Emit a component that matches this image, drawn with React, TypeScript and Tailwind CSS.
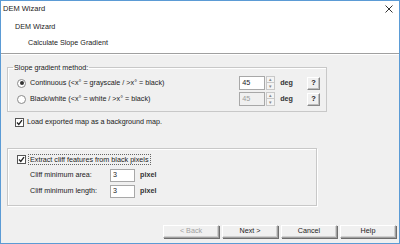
import React from "react";

const font = { fontFamily: '"Liberation Sans", Tahoma, sans-serif' };

function Radio({ checked }: { checked?: boolean }) {
  return (
    <span className="flex h-[9px] w-[9px] items-center justify-center rounded-full border border-[#8a8a8a] bg-white">
      {checked && <span className="h-[4px] w-[4px] rounded-full bg-[#333]" />}
    </span>
  );
}

function Check() {
  return (
    <span className="flex h-[9px] w-[9px] items-center justify-center border border-[#555] bg-white">
      <svg width="7" height="7" viewBox="0 0 7 7">
        <path d="M1 3.5 L2.8 5.5 L6 1.2" stroke="#222" strokeWidth="1.3" fill="none" />
      </svg>
    </span>
  );
}

function Spin({ value, disabled }: { value: string; disabled?: boolean }) {
  return (
    <div className="flex items-center">
      <div
        className={`flex h-[14px] w-[26px] items-center border border-[#a8a8a8] pl-[2px] text-[7.2px] ${
          disabled ? "bg-[#f0f0f0] text-[#9a9a9a]" : "bg-white text-[#222]"
        }`}
      >
        {value}
      </div>
      <div className="ml-[1px] flex h-[14px] w-[9px] flex-col">
        <div className="flex h-[7px] items-center justify-center border border-[#c8c8c8] bg-[#f4f4f4] text-[5px] leading-none text-[#888]">
          ▴
        </div>
        <div className="flex h-[7px] items-center justify-center border border-t-0 border-[#c8c8c8] bg-[#f4f4f4] text-[5px] leading-none text-[#888]">
          ▾
        </div>
      </div>
      <span className="ml-[5px] text-[7.2px] font-bold text-[#333]">deg</span>
    </div>
  );
}

function HelpBtn() {
  return (
    <div className="flex h-[13px] w-[13px] items-center justify-center border border-[#888] border-t-white border-l-white bg-[#f0f0f0] text-[7.5px] font-bold text-[#222] shadow-[inset_-1px_-1px_0_#bdbdbd]">
      ?
    </div>
  );
}

function Btn({ label, disabled }: { label: string; disabled?: boolean }) {
  return (
    <div
      className={`flex h-[13px] w-[56px] items-center justify-center border border-[#a0a0a0] border-t-white border-l-white bg-[#f0f0f0] text-[7.2px] shadow-[inset_-1px_-1px_0_#d0d0d0,1px_1px_0_#6d6d6d] ${
        disabled ? "text-[#a0a0a0]" : "text-[#222]"
      }`}
    >
      {label}
    </div>
  );
}

export default function App() {
  return (
    <div
      style={font}
      className="flex h-[244px] w-[400px] flex-col overflow-hidden border border-[#5b9bd5] bg-[#f0f0f0] text-[7.2px] text-[#1a1a1a]"
    >
      {/* title + header */}
      <div className="h-[52px] bg-white">
        <div className="flex h-[15px] items-center justify-between pl-[2px] pr-[6px]">
          <span className="text-[7.5px]">DEM Wizard</span>
          <svg width="8" height="8" viewBox="0 0 8 8">
            <path d="M0.5 0.5 L7.5 7.5 M7.5 0.5 L0.5 7.5" stroke="#333" strokeWidth="1" />
          </svg>
        </div>
        <div className="ml-[14px] mt-[6px] leading-[9px]">DEM Wizard</div>
        <div className="ml-[27px] mt-[7px] leading-[9px]">Calculate Slope Gradient</div>
      </div>
      <div className="h-[1px] bg-[#a0a0a0]" />
      <div className="h-[1px] bg-white" />

      {/* body */}
      <div className="flex flex-1 flex-col px-[6px]">
        <fieldset className="mt-[8px] mr-[66px] h-[49px] border border-[#c8c8c8] pl-[9px] pr-[6px] shadow-[inset_1px_1px_0_#fff]">
          <legend className="-ml-[4px] px-[1px] leading-[9px]">Slope gradient method:</legend>
          <div className="mt-[3px] flex h-[16px] items-center">
            <Radio checked />
            <span className="ml-[4px] flex-1">Continuous (&lt;x° = grayscale / &gt;x° = black)</span>
            <Spin value="45" />
            <div className="ml-[14px]">
              <HelpBtn />
            </div>
          </div>
          <div className="flex h-[16px] items-center">
            <Radio />
            <span className="ml-[4px] flex-1">Black/white (&lt;x° = white / &gt;x° = black)</span>
            <Spin value="45" disabled />
            <div className="ml-[14px]">
              <HelpBtn />
            </div>
          </div>
        </fieldset>

        <div className="ml-[8px] mt-[5px] flex items-center">
          <Check />
          <span className="ml-[3px]">Load exported map as a background map.</span>
        </div>

        <div className="mt-[20px] mr-[76px] h-[58px] border border-[#c8c8c8] pl-[9px] pt-[5px] shadow-[inset_1px_1px_0_#fff,1px_1px_0_#fff]">
          <div className="flex items-center">
            <Check />
            <span className="ml-[2px] border border-dotted border-[#666] px-[1px] leading-[9px]">
              Extract cliff features from black pixels
            </span>
          </div>
          <div className="ml-[13px] mt-[4px] flex h-[14px] items-center">
            <span className="w-[80px]">Cliff minimum area:</span>
            <div className="flex h-[13px] w-[25px] items-center border border-[#a8a8a8] bg-white pl-[2px]">3</div>
            <span className="ml-[5px] font-bold text-[#333]">pixel</span>
          </div>
          <div className="ml-[13px] mt-[2px] flex h-[14px] items-center">
            <span className="w-[80px]">Cliff minimum length:</span>
            <div className="flex h-[13px] w-[25px] items-center border border-[#a8a8a8] bg-white pl-[2px]">3</div>
            <span className="ml-[5px] font-bold text-[#333]">pixel</span>
          </div>
        </div>

        <div className="-mr-[3px] mt-auto mb-[5px] flex justify-end gap-[3px]">
          <Btn label="< Back" disabled />
          <Btn label="Next >" />
          <Btn label="Cancel" />
          <Btn label="Help" />
        </div>
      </div>
    </div>
  );
}
